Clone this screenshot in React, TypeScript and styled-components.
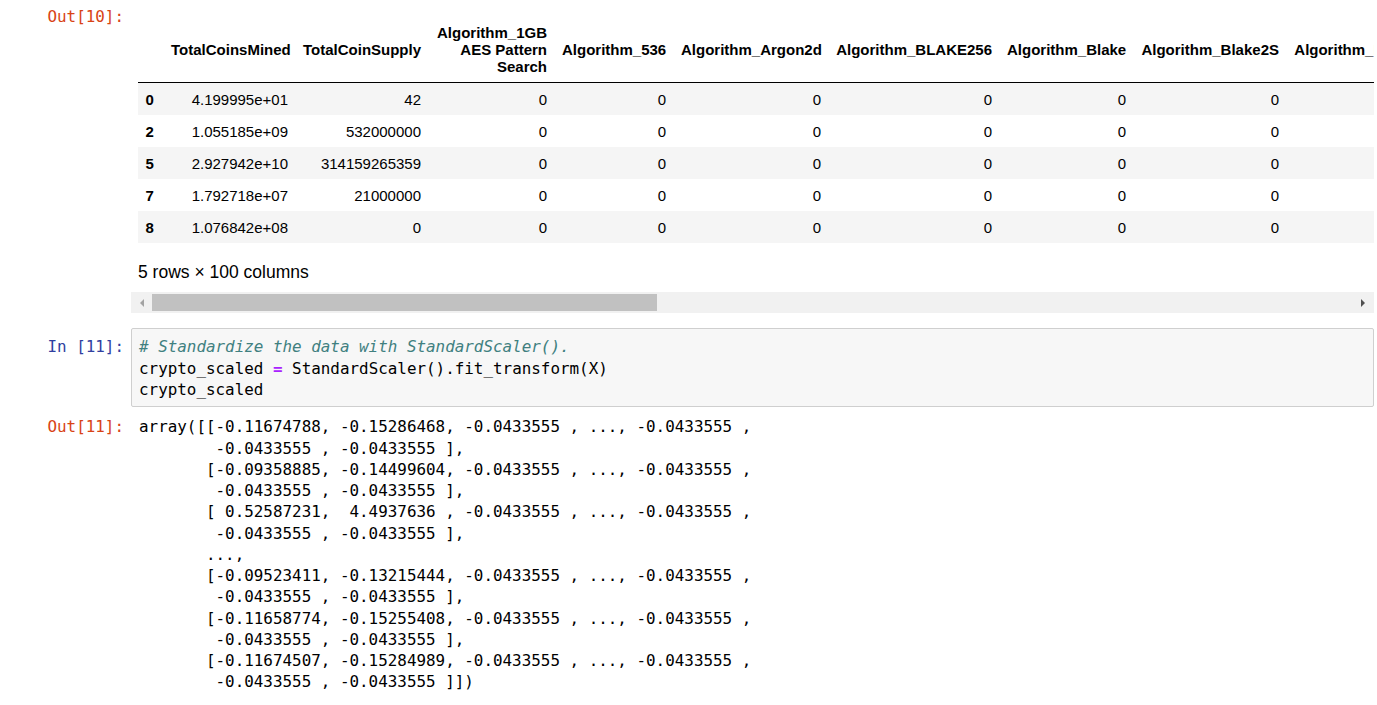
import React from 'react';
import styled, { createGlobalStyle } from 'styled-components';

const Global = createGlobalStyle`
  html, body { margin: 0; padding: 0; background: #fff; }
  body { font-family: "Liberation Sans", Arial, sans-serif; }
`;

const MONO = `"DejaVu Sans Mono", "Liberation Mono", monospace`;

const Notebook = styled.div`
  display: flex;
  flex-direction: column;
  width: 1377px;
  padding-right: 3px;
  box-sizing: border-box;
`;

const Cell = styled.div<{ $mt?: number }>`
  display: flex;
  align-items: flex-start;
  margin-top: ${(p) => p.$mt ?? 0}px;
`;

const Prompt = styled.div<{ $kind: 'in' | 'out'; $pt: number }>`
  flex: 0 0 131px;
  box-sizing: border-box;
  padding: ${(p) => p.$pt}px 7px 0 0;
  text-align: right;
  font-family: ${MONO};
  font-size: 15.9px;
  line-height: 21.25px;
  color: ${(p) => (p.$kind === 'in' ? '#303F9F' : '#D84315')};
  white-space: pre;
`;

const OutputArea = styled.div`
  flex: 1;
  min-width: 0;
  display: flex;
  flex-direction: column;
`;

const TableScroll = styled.div`
  overflow: hidden;
  padding: 16px 0 9.5px 7px;
`;

const Table = styled.table<{ $w: number }>`
  border-collapse: collapse;
  border-spacing: 0;
  table-layout: fixed;
  width: ${(p) => p.$w}px;
  font-family: "Liberation Sans", Arial, sans-serif;
  font-size: 15px;
  color: #000;
`;

const Col = styled.col<{ $w: number }>`
  width: ${(p) => p.$w}px;
`;

const THead = styled.thead`
  border-bottom: 1px solid #000;
`;

const HeadCell = styled.th`
  padding: 7.5px;
  line-height: 17px;
  font-weight: bold;
  text-align: right;
  vertical-align: middle;
  white-space: nowrap;
`;

const BodyRow = styled.tr`
  &:nth-child(odd) {
    background: #f5f5f5;
  }
`;

const IndexCell = styled.th`
  padding: 7.5px;
  line-height: 17px;
  font-weight: bold;
  text-align: left;
  vertical-align: middle;
  white-space: nowrap;
`;

const DataCell = styled.td`
  padding: 7.5px;
  line-height: 17px;
  text-align: right;
  vertical-align: middle;
  white-space: nowrap;
`;

const Note = styled.p`
  margin: 18.5px 0 0;
  font-family: "Liberation Sans", Arial, sans-serif;
  font-size: 17.5px;
  line-height: 21px;
  color: #000;
`;

const ScrollTrack = styled.div`
  display: flex;
  align-items: center;
  height: 21px;
  background: #f1f1f1;
`;

const ScrollArrow = styled.div`
  flex: 0 0 21px;
  height: 21px;
  display: flex;
  align-items: center;
  justify-content: center;
`;

const ScrollThumb = styled.div<{ $w: number }>`
  flex: 0 0 ${(p) => p.$w}px;
  height: 17px;
  background: #c1c1c1;
`;

const ScrollRest = styled.div`
  flex: 1;
`;

const InputBox = styled.div`
  flex: 1;
  min-width: 0;
  box-sizing: border-box;
  border: 1px solid #cfcfcf;
  border-radius: 2px;
  background: #f7f7f7;
  padding: 7.4px 7px 5.85px;
`;

const Code = styled.pre`
  margin: 0;
  font-family: ${MONO};
  font-size: 15.9px;
  line-height: 21.25px;
  color: #000;
  white-space: pre;
`;

const OutPre = styled(Code)`
  flex: 1;
  padding-left: 8px;
`;

const Comment = styled.span`
  color: #408080;
  font-style: italic;
`;

const Operator = styled.span`
  color: #aa22ff;
  font-weight: bold;
`;

type Column = { name: string[]; w: number };

const columns: Column[] = [
  { name: ['TotalCoinsMined'], w: 132 },
  { name: ['TotalCoinSupply'], w: 133 },
  { name: ['Algorithm_1GB', 'AES Pattern', 'Search'], w: 126 },
  { name: ['Algorithm_536'], w: 119 },
  { name: ['Algorithm_Argon2d'], w: 155 },
  { name: ['Algorithm_BLAKE256'], w: 171 },
  { name: ['Algorithm_Blake'], w: 134 },
  { name: ['Algorithm_Blake2S'], w: 153 },
  { name: ['Algorithm_Blake2b'], w: 152 },
];

const INDEX_W = 25.5;

const rows: { idx: string; mined: string; supply: string }[] = [
  { idx: '0', mined: '4.199995e+01', supply: '42' },
  { idx: '2', mined: '1.055185e+09', supply: '532000000' },
  { idx: '5', mined: '2.927942e+10', supply: '314159265359' },
  { idx: '7', mined: '1.792718e+07', supply: '21000000' },
  { idx: '8', mined: '1.076842e+08', supply: '0' },
];

const outputText = `array([[-0.11674788, -0.15286468, -0.0433555 , ..., -0.0433555 ,
        -0.0433555 , -0.0433555 ],
       [-0.09358885, -0.14499604, -0.0433555 , ..., -0.0433555 ,
        -0.0433555 , -0.0433555 ],
       [ 0.52587231,  4.4937636 , -0.0433555 , ..., -0.0433555 ,
        -0.0433555 , -0.0433555 ],
       ...,
       [-0.09523411, -0.13215444, -0.0433555 , ..., -0.0433555 ,
        -0.0433555 , -0.0433555 ],
       [-0.11658774, -0.15255408, -0.0433555 , ..., -0.0433555 ,
        -0.0433555 , -0.0433555 ],
       [-0.11674507, -0.15284989, -0.0433555 , ..., -0.0433555 ,
        -0.0433555 , -0.0433555 ]])`;

const Triangle: React.FC<{ dir: 'left' | 'right'; color: string }> = ({ dir, color }) => (
  <svg width="5" height="8" viewBox="0 0 5 8">
    {dir === 'left' ? (
      <polygon points="5,0 5,8 1,4" fill={color} />
    ) : (
      <polygon points="0,0 0,8 4,4" fill={color} />
    )}
  </svg>
);

export default function App() {
  const tableWidth = INDEX_W + columns.reduce((s, c) => s + c.w, 0);
  return (
    <>
      <Global />
      <Notebook>
        <Cell>
          <Prompt $kind="out" $pt={6.4}>Out[10]:</Prompt>
          <OutputArea>
            <TableScroll>
              <Table $w={tableWidth}>
                <colgroup>
                  <Col $w={INDEX_W} />
                  {columns.map((c) => (
                    <Col key={c.name.join(' ')} $w={c.w} />
                  ))}
                </colgroup>
                <THead>
                  <tr>
                    <HeadCell />
                    {columns.map((c) => (
                      <HeadCell key={c.name.join(' ')}>
                        {c.name.map((part, i) => (
                          <React.Fragment key={part}>
                            {i > 0 && <br />}
                            {part}
                          </React.Fragment>
                        ))}
                      </HeadCell>
                    ))}
                  </tr>
                </THead>
                <tbody>
                  {rows.map((r) => (
                    <BodyRow key={r.idx}>
                      <IndexCell>{r.idx}</IndexCell>
                      <DataCell>{r.mined}</DataCell>
                      <DataCell>{r.supply}</DataCell>
                      {columns.slice(2).map((c) => (
                        <DataCell key={c.name.join(' ')}>0</DataCell>
                      ))}
                    </BodyRow>
                  ))}
                </tbody>
              </Table>
              <Note>5 rows × 100 columns</Note>
            </TableScroll>
            <ScrollTrack>
              <ScrollArrow>
                <Triangle dir="left" color="#a3a3a3" />
              </ScrollArrow>
              <ScrollThumb $w={505} />
              <ScrollRest />
              <ScrollArrow>
                <Triangle dir="right" color="#505050" />
              </ScrollArrow>
            </ScrollTrack>
          </OutputArea>
        </Cell>

        <Cell $mt={15}>
          <Prompt $kind="in" $pt={8.4}>In [11]:</Prompt>
          <InputBox>
            <Code>
              <Comment># Standardize the data with StandardScaler().</Comment>
              {'\n'}crypto_scaled <Operator>=</Operator> StandardScaler().fit_transform(X)
              {'\n'}crypto_scaled
            </Code>
          </InputBox>
        </Cell>

        <Cell $mt={9.4}>
          <Prompt $kind="out" $pt={0}>Out[11]:</Prompt>
          <OutPre>{outputText}</OutPre>
        </Cell>
      </Notebook>
    </>
  );
}
